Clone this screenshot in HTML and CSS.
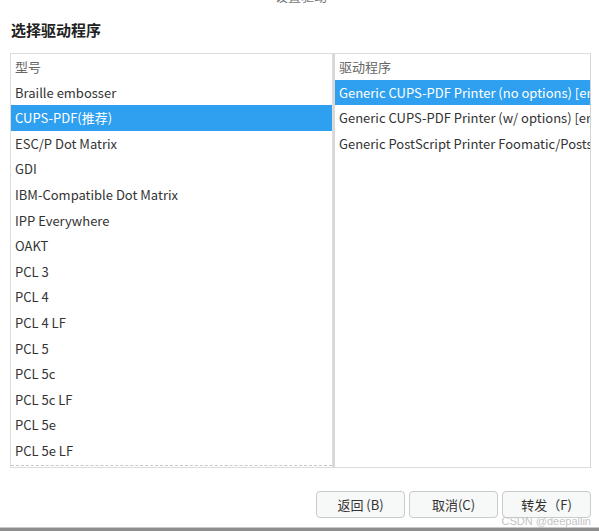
FILE: index.html
```html
<!DOCTYPE html>
<html lang="zh">
<head>
    <meta charset="UTF-8">
    <meta name="viewport" content="width=device-width, initial-scale=1.0">
    <link rel="stylesheet" href="styles.css">
    <title>选择驱动程序</title>
</head>
<body>
    <div class="dialog">
        <div class="window-title">设置驱动</div>
        <h2 class="page-title">选择驱动程序</h2>

        <div class="lists">
            <div class="list list-models">
                <div class="list-inner">
                    <div class="row head">型号</div>
                    <div class="row">Braille embosser</div>
                    <div class="row selected">CUPS-PDF(推荐)</div>
                    <div class="row">ESC/P Dot Matrix</div>
                    <div class="row">GDI</div>
                    <div class="row">IBM-Compatible Dot Matrix</div>
                    <div class="row">IPP Everywhere</div>
                    <div class="row">OAKT</div>
                    <div class="row">PCL 3</div>
                    <div class="row">PCL 4</div>
                    <div class="row">PCL 4 LF</div>
                    <div class="row">PCL 5</div>
                    <div class="row">PCL 5c</div>
                    <div class="row">PCL 5c LF</div>
                    <div class="row">PCL 5e</div>
                    <div class="row">PCL 5e LF</div>
                </div>
            </div>
            <div class="list list-drivers">
                <div class="row head">驱动程序</div>
                <div class="row selected">Generic CUPS-PDF Printer (no options) [en]</div>
                <div class="row">Generic CUPS-PDF Printer (w/ options) [en]</div>
                <div class="row">Generic PostScript Printer Foomatic/Postscript [en]</div>
            </div>
        </div>

        <div class="buttons">
            <button class="btn">返回 (B)</button>
            <button class="btn">取消(C)</button>
            <button class="btn">转发（F)</button>
        </div>
    </div>
    <div class="watermark">CSDN @deepallin</div>
    <div class="taskbar"></div>
</body>
</html>
```

FILE: styles.css
```css
body {
    margin: 0;
    width: 599px;
    height: 531px;
    overflow: hidden;
    background: #ffffff;
    font-family: "Noto Sans CJK SC", "Noto Sans", sans-serif;
    color: #333333;
    position: relative;
}

.dialog {
    height: 527px;
    display: flex;
    flex-direction: column;
}

.window-title {
    height: 14px;
    margin-top: -11px;
    padding-left: 275px;
    font-size: 13px;
    line-height: 14px;
    color: #777777;
}

.page-title {
    margin: 14px 0 0 11px;
    height: 30px;
    font-size: 15px;
    line-height: 26px;
    font-weight: bold;
    color: #222222;
}

.lists {
    display: flex;
    margin: 6px 0 0 10px;
    height: 415px;
    flex-shrink: 0;
}

.list {
    border: 1px solid #dcdcdc;
    overflow: hidden;
    box-sizing: border-box;
}

.list-models {
    width: 323px;
    padding: 0 0 1px 0;
}

.list-inner {
    height: 411px;
    border-bottom: 1px dashed #c8c8c8;
    overflow: hidden;
}

.list-drivers {
    width: 258px;
    border-left: 2px solid #d8d8d8;
    border-right: 1px solid #d4d4d4;
}

.row {
    height: 25.6px;
    line-height: 25.6px;
    padding-left: 4px;
    font-size: 13px;
    white-space: nowrap;
    overflow: hidden;
}

.row.head {
    color: #666666;
}

.row.selected {
    background: #2f9ff0;
    color: #ffffff;
}

.buttons {
    display: flex;
    justify-content: flex-end;
    gap: 4px;
    margin: 23px 8px 0 0;
}

.btn {
    width: 89px;
    height: 27px;
    border: 1px solid #c9cccc;
    border-radius: 4px;
    background: #f7f8f8;
    color: #333333;
    font-family: "Noto Sans CJK SC", "Noto Sans", sans-serif;
    font-size: 13px;
    padding: 0;
}

.watermark {
    position: absolute;
    right: 8px;
    bottom: 4px;
    font-family: "Liberation Sans", sans-serif;
    font-size: 11px;
    color: #c4c4c4;
}

.taskbar {
    height: 4px;
    border-top: 1px solid #c8c8c8;
    background: #8e8e8e;
    box-sizing: border-box;
}
```
